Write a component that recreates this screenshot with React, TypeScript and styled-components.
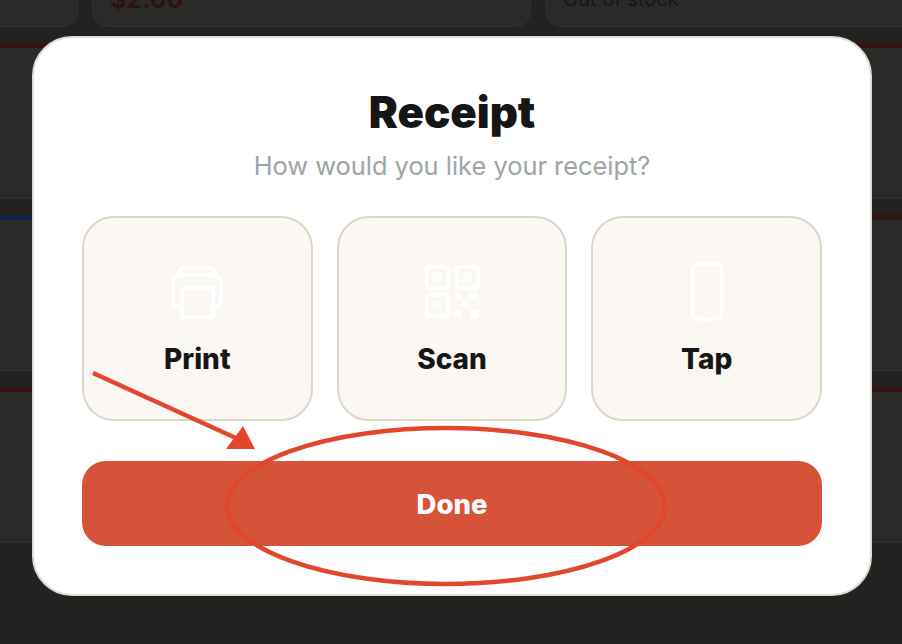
import React from "react";
import styled, { createGlobalStyle } from "styled-components";

const Global = createGlobalStyle`
  html, body { margin: 0; padding: 0; height: 100%; overflow: hidden; background: #232220; }
  #root { height: 100%; }
`;

const Page = styled.div`
  position: relative;
  width: 902px;
  height: 644px;
  overflow: hidden;
  font-family: Inter, "Liberation Sans", sans-serif;
`;

const Catalog = styled.div`
  display: grid;
  grid-template-columns: 439px 439px 439px;
  grid-auto-rows: 156px;
  gap: 16px 14px;
  margin: -129px 0 0 -361px;
  width: 1345px;
`;

const Tile = styled.div<{ $accent?: string }>`
  box-sizing: border-box;
  background: #2a2a28;
  border: 1px solid #30302e;
  border-top: ${(p) => (p.$accent ? `5px solid ${p.$accent}` : "1px solid #30302e")};
  border-radius: ${(p) => (p.$accent ? "0" : "16px")};
  padding: 0 17px 15px;
  display: flex;
  align-items: flex-end;
  line-height: 24px;
`;

const Price = styled.span`
  color: #2f1210;
  font-weight: 700;
  font-size: 25px;
`;

const Stock = styled.span`
  color: #161615;
  font-size: 20px;
`;

const Overlay = styled.div`
  position: absolute;
  inset: 0;
  display: flex;
  align-items: flex-start;
  justify-content: center;
  padding: 36px 0 0 2px;
`;

const Modal = styled.section`
  box-sizing: border-box;
  width: 840px;
  height: 560px;
  background: #fff;
  border: 2px solid #deded4;
  border-radius: 40px;
  padding: 48px;
  display: flex;
  flex-direction: column;
  align-items: stretch;
`;

const Title = styled.h2`
  margin: 0;
  text-align: center;
  font-size: 43.7px;
  line-height: 54px;
  font-weight: 900;
  color: #161616;
`;

const Subtitle = styled.p`
  margin: 10px 0 0;
  text-align: center;
  font-size: 25.4px;
  line-height: 32px;
  color: #9ea5a5;
`;

const Options = styled.div`
  display: grid;
  grid-template-columns: repeat(3, 1fr);
  gap: 24px;
  margin-top: 34px;
`;

const Option = styled.button`
  box-sizing: border-box;
  height: 205px;
  background: #fbf8f3;
  border: 2px solid #dcd6c8;
  border-radius: 32px;
  display: flex;
  flex-direction: column;
  align-items: center;
  padding: 42px 0 0;
  font-family: inherit;
  color: #161616;
`;

const IconSlot = styled.span`
  display: block;
  width: 64px;
  height: 64px;
  color: #fff;
`;

const OptionLabel = styled.span`
  margin-top: 18px;
  font-size: 28px;
  line-height: 34px;
  font-weight: 800;
`;

const DoneButton = styled.button`
  height: 85px;
  margin-top: 40px;
  border: 0;
  border-radius: 24px;
  background: #d65238;
  color: #fff;
  font-family: inherit;
  font-size: 27.5px;
  font-weight: 800;
`;

const Annotation = styled.svg`
  position: absolute;
  inset: 0;
  width: 902px;
  height: 644px;
  pointer-events: none;
`;

const PrinterIcon = () => (
  <svg viewBox="0 0 64 64" width="64" height="64" fill="none" stroke="currentColor" strokeWidth="4" strokeLinejoin="round">
    <path d="M14 14v-1a5 5 0 0 1 5-5h26a5 5 0 0 1 5 5v1" />
    <rect x="8" y="15" width="48" height="33" rx="8" />
    <rect x="17" y="28" width="31" height="29" rx="2" fill="#fbf8f3" />
  </svg>
);

const QrIcon = () => (
  <svg viewBox="0 0 64 64" width="64" height="64" fill="none" stroke="currentColor" strokeWidth="4">
    <rect x="7" y="7" width="21" height="21" rx="2" />
    <rect x="37" y="7" width="21" height="21" rx="2" />
    <rect x="7" y="35" width="21" height="21" rx="2" />
    <rect x="13" y="13" width="9" height="9" fill="currentColor" stroke="none" opacity="0.75" />
    <rect x="43" y="13" width="9" height="9" fill="currentColor" stroke="none" opacity="0.75" />
    <rect x="13" y="41" width="9" height="9" fill="currentColor" stroke="none" opacity="0.75" />
    <path d="M35 33h6v6h-6zM49 33h9v6h-9zM42 40h7v7h-7zM35 50h6v8h-6zM51 50h8v8h-8z" fill="currentColor" stroke="none" />
  </svg>
);

const PhoneIcon = () => (
  <svg viewBox="0 0 64 64" width="64" height="64" fill="none" stroke="currentColor" strokeWidth="4">
    <rect x="17.5" y="4" width="29" height="55" rx="6" />
    <path d="M26 5h12" strokeWidth="3" />
  </svg>
);

const options = [
  { label: "Print", icon: <PrinterIcon /> },
  { label: "Scan", icon: <QrIcon /> },
  { label: "Tap", icon: <PhoneIcon /> },
];

const tiles: { accent?: string; node?: React.ReactNode }[] = [
  {}, { node: <Price>$2.00</Price> }, { node: <Stock>Out of stock</Stock> },
  { accent: "#331310" }, { accent: "#331310" }, { accent: "#331310" },
  { accent: "#14233f" }, { accent: "#331310" }, { accent: "#331310" },
  { accent: "#331310" }, { accent: "#331310" }, { accent: "#331310" },
];

export default function App() {
  return (
    <Page>
      <Global />
      <Catalog>
        {tiles.map((t, i) => (
          <Tile key={i} $accent={t.accent}>{t.node}</Tile>
        ))}
      </Catalog>
      <Overlay>
        <Modal>
          <Title>Receipt</Title>
          <Subtitle>How would you like your receipt?</Subtitle>
          <Options>
            {options.map((o) => (
              <Option key={o.label}>
                <IconSlot>{o.icon}</IconSlot>
                <OptionLabel>{o.label}</OptionLabel>
              </Option>
            ))}
          </Options>
          <DoneButton>Done</DoneButton>
        </Modal>
      </Overlay>
      <Annotation viewBox="0 0 902 644">
        <ellipse cx="446" cy="506" rx="219" ry="78" fill="none" stroke="#e2472d" strokeWidth="4.5" />
        <path d="M93 373 L238 439" stroke="#e2472d" strokeWidth="4.5" />
        <path d="M226 449 L243 426 L255 449 Z" fill="#e2472d" />
      </Annotation>
    </Page>
  );
}
